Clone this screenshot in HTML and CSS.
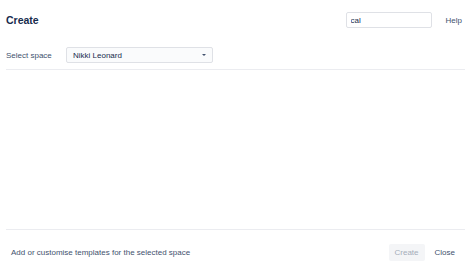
FILE: index.html
```html
<html lang="en">

<head>
	<meta charset="UTF-8">
	<title>Create</title>
	<link rel="stylesheet" href="styles.css">
</head>

<body>
	<div class="dialog">
		<div class="header">
			<h2 class="title">Create</h2>
			<input class="search" type="text" value="cal">
			<a class="help" href="#">Help</a>
		</div>
		<div class="space-row">
			<label class="label">Select space</label>
			<div class="select">
				<span>Nikki Leonard</span>
				<span class="arrow"></span>
			</div>
		</div>
		<div class="templates"></div>
		<div class="footer">
			<a class="customise" href="#">Add or customise templates for the selected space</a>
			<div class="actions">
				<button class="button" disabled>Create</button>
				<button class="button link">Close</button>
			</div>
		</div>
	</div>
</body>

</html>
```

FILE: styles.css
```css
body {
	background: #fff;
	margin: 0;
	padding: 0;
	font-family: "Liberation Sans", Arial, sans-serif;
	font-size: 8px;
	color: #172b4d;
}

.dialog {
	display: flex;
	flex-direction: column;
	height: 263px;
}

.header {
	display: flex;
	align-items: center;
	padding: 12px 11px 0 6px;
	height: 16px;
}

.title {
	flex: 1;
	margin: 0;
	font-size: 10.5px;
	font-weight: bold;
	color: #172b4d;
}

.search {
	width: 86px;
	height: 16px;
	box-sizing: border-box;
	border: 1px solid #dfe1e6;
	border-radius: 2px;
	padding: 0 4px;
	font-family: inherit;
	font-size: 8px;
	color: #172b4d;
	outline: none;
}

.help {
	margin-left: 14px;
	color: #42526e;
	text-decoration: none;
}

.space-row {
	display: flex;
	align-items: center;
	margin: 19px 8px 0 6px;
	padding-bottom: 6px;
	border-bottom: 1px solid #ebecf0;
}

.label {
	width: 60px;
	color: #42526e;
}

.select {
	display: flex;
	align-items: center;
	justify-content: space-between;
	width: 147px;
	height: 16px;
	box-sizing: border-box;
	padding: 0 6px;
	background: #fafbfc;
	border: 1px solid #dfe1e6;
	border-radius: 2px;
	color: #172b4d;
}

.arrow {
	width: 0;
	height: 0;
	border-left: 2.5px solid transparent;
	border-right: 2.5px solid transparent;
	border-top: 2.5px solid #42526e;
}

.templates {
	flex: 1;
	margin: 0 8px 0 6px;
	border-bottom: 1px solid #ebecf0;
}

.footer {
	display: flex;
	align-items: center;
	justify-content: space-between;
	padding: 14px 12px 2px 11px;
	height: 17px;
}

.customise {
	color: #42526e;
	text-decoration: none;
}

.actions {
	display: flex;
	align-items: center;
	gap: 4px;
}

.button {
	background: #f4f5f7;
	border: 0;
	border-radius: 2px;
	padding: 0 6px;
	height: 17px;
	font-family: inherit;
	font-size: 8px;
	color: #a5adba;
}

.button.link {
	background: none;
	color: #42526e;
	cursor: pointer;
}
```
